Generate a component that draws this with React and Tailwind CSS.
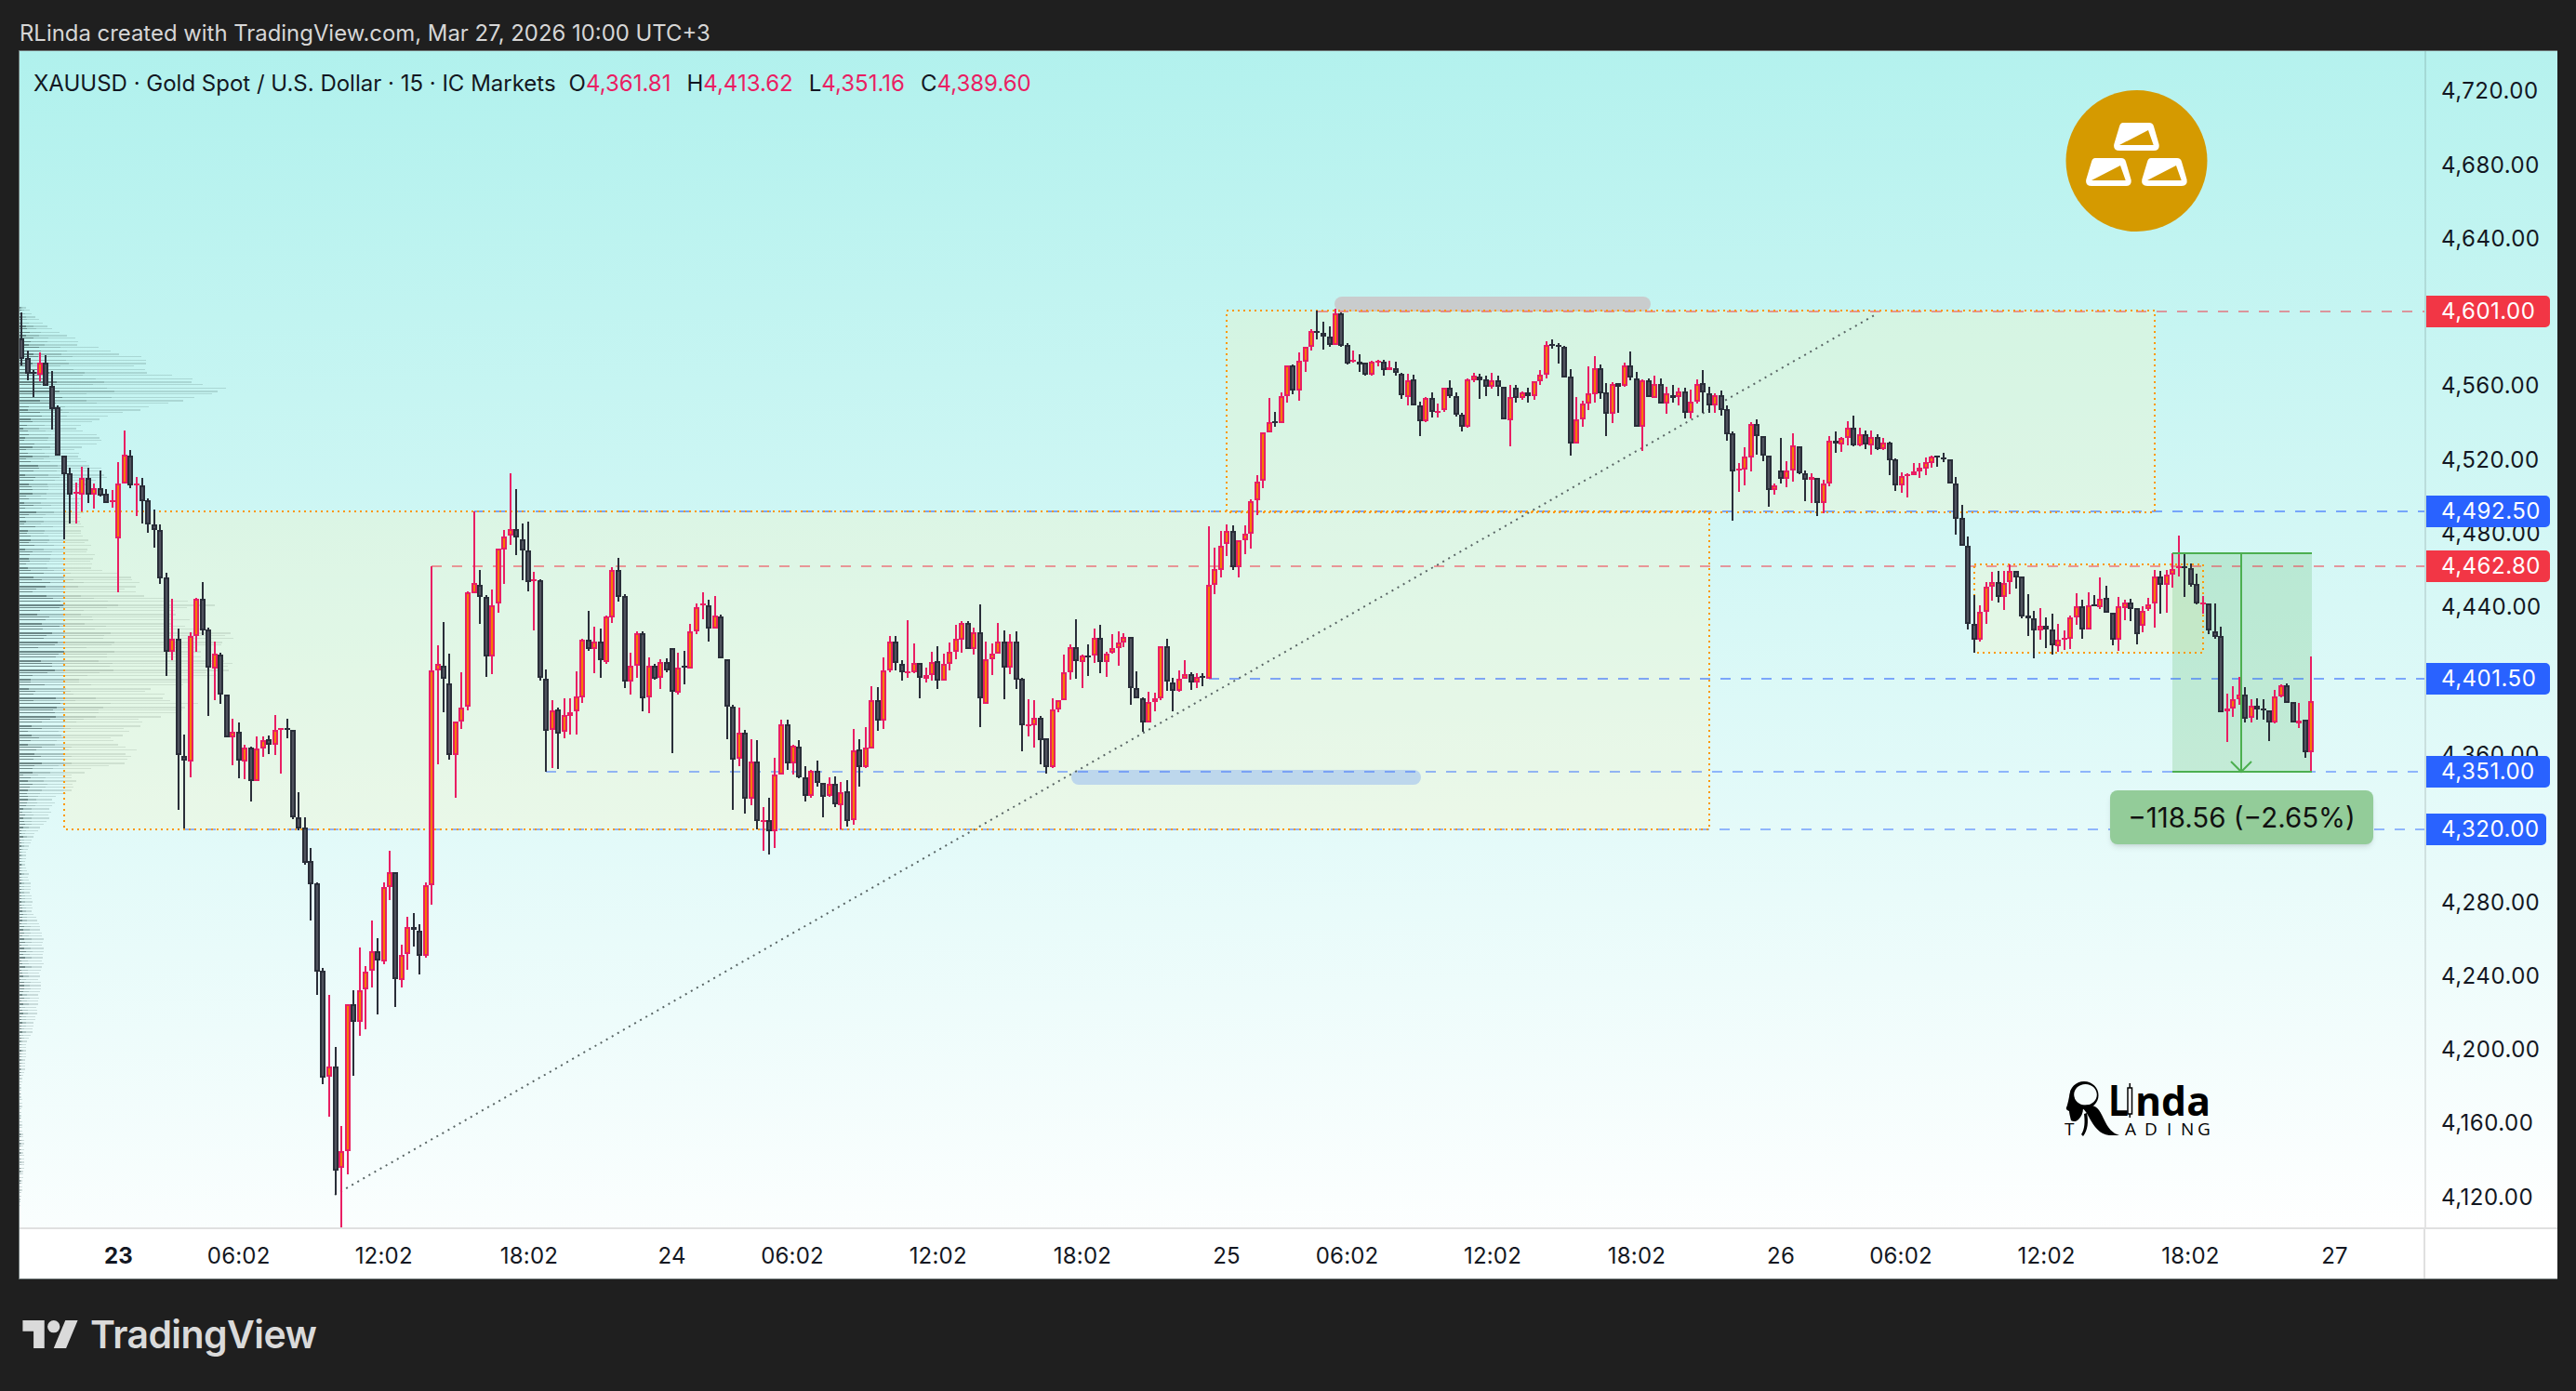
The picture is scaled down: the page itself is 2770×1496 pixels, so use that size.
import React from "react";

const seg = (ox, sx, oy, sy, rows) =>
  rows.map(([zx, up, bt, bb, wt, wb]) => ({
    x: Math.round(ox + zx / sx),
    up,
    bt: oy + bt / sy,
    bb: oy + bb / sy,
    wt: oy + wt / sy,
    wb: oy + wb / sy,
  }));

const A = [
[0,0,364,386,336,393],[1,0,385,402,377,409],[2,0,400,401,398,427],[3,1,390,403,379,410],[4,0,390,415,382,415],[5,0,415,440,399,462],[6,0,438,490,436,490],[7,0,490,510,490,580],[8,0,509,532,503,563],[9,1,529,531,519,563],[10,1,514,532,502,550],[11,0,514,532,503,541],[12,1,525,532,520,547],[13,0,525,533,506,534],[14,0,531,541,526,541],[15,1,538,540,527,546],[16,1,520,579,497,637],[17,1,489,520,463,520],[18,0,490,522,484,525],[19,1,520,522,513,555],[20,0,522,539,514,563],[21,0,538,564,536,573],[22,0,564,570,548,589],[23,0,570,622,564,628],[24,0,621,701,616,727],[25,1,687,701,644,710],[26,0,687,812,676,871],[27,0,813,818,790,891],[28,1,684,819,680,836],[29,1,644,684,643,701],[30,0,644,678,626,683],[31,0,677,718,675,770],[32,1,703,719,690,753],[33,0,704,747,702,757],[34,0,747,793,747,793],[35,1,787,793,773,823],[36,0,787,818,777,837],[37,1,804,819,801,838],[38,0,804,840,803,862],[39,1,805,840,792,840],[40,1,796,805,792,814],[41,0,795,801,791,811],[42,1,785,801,769,812],[43,1,783,785,783,832],[44,0,783,785,773,794],[45,0,785,879,785,881],[46,0,879,891,852,893],[47,0,890,928,879,930],[48,0,926,951,912,990],[49,0,950,1045,949,1070],[50,0,1044,1159,1041,1166],
];

const B = [
[121,1,1268,1290,1118,1375],[136,0,1268,1488,1226,1538],[150,1,1446,1482,1393,1607],[165,1,1136,1445,1136,1495],[179,0,1136,1173,1107,1288],[194,1,1107,1173,1018,1204],[208,1,1069,1107,1056,1190],[223,1,1026,1067,960,1102],[237,0,1026,1046,998,1158],[252,1,890,1046,880,1053],[266,1,858,890,813,917],[280,0,858,1084,858,1143],[295,1,1032,1085,1011,1101],[309,1,975,1032,953,1064],[324,0,975,981,945,1015],[338,0,981,1034,968,1074],[353,1,885,1034,880,1038],[367,1,434,886,214,927],[382,1,420,434,380,630],[396,0,424,452,331,521],[411,0,460,611,398,622],[425,1,541,612,541,702],[440,1,511,541,437,557],[454,1,269,511,267,518],[470,1,248,269,98,269],[484,0,252,278,221,335],[499,0,279,404,275,448],[512,1,295,403,262,441],[528,1,177,292,177,312],[542,1,150,178,138,251],[557,1,136,150,18,169],[571,0,136,154,51,190],[587,0,156,179,124,243],[600,0,181,248,120,267],[614,1,241,245,225,349],[629,0,244,450,242,456],[643,0,450,560,432,647],[658,1,518,560,496,639],[672,0,515,565,512,641],[687,1,528,564,491,575],[702,1,521,528,491,568],[716,1,489,521,435,569],[731,1,368,489,366,501],[745,0,368,388,307,392],[760,1,372,388,341,439],[775,0,373,413,344,447],[789,1,320,416,317,418],[803,1,221,320,216,333],[817,0,221,277,196,288],[833,0,277,458,273,470],[846,1,424,458,396,484],[862,1,354,423,351,449],[876,0,354,492,350,519],[891,1,424,491,406,523],[904,0,424,451,419,453],[918,1,415,449,409,472],[933,0,415,432,408,437],[947,0,387,479,387,608],[962,1,427,480,396,484],[976,0,424,427,392,463],[991,1,350,428,335,430],[1006,1,299,350,292,356],[1021,1,293,295,269,325],[1035,0,295,344,284,372],[1050,1,317,344,276,344],[1064,0,319,407,315,407],[1079,0,409,509,409,578],[1093,0,509,620,506,728],[1108,1,565,620,511,634],[1122,0,565,705,558,734],[1137,1,626,705,579,718],[1151,0,626,752,580,769],[1166,1,748,752,722,815],[1180,0,748,771,702,822],[1195,1,652,771,617,807],[1210,1,546,652,538,652],[1225,0,546,629,537,642],[1238,1,592,629,590,652],[1252,0,593,658,580,660],[1267,0,658,697,635,710],[1282,1,645,697,643,702],[1296,0,645,670,623,678],[1310,0,670,700,670,743],[1325,1,672,698,659,700],[1339,0,672,716,657,721],[1354,1,689,716,668,768],[1368,0,687,750,664,762],[1384,1,601,748,557,758],[1398,0,599,636,578,678],[1413,1,595,636,553,639],[1427,1,495,597,467,597],[1442,0,495,538,468,561],[1456,1,433,538,406,556],[1471,1,373,433,360,437],[1485,0,373,419,360,433],[1500,0,420,437,412,456],[1514,1,435,438,327,449],[1529,1,418,437,376,439],[1543,0,418,449,417,492],[1558,1,442,449,428,460],
];

const C = [
[4,1,695,737,663,755],[18,0,694,757,645,782],[33,1,703,757,669,757],[47,1,664,703,633,722],[62,1,622,664,576,686],[76,1,571,625,565,668],[91,0,571,655,565,655],[105,1,601,655,585,671],[121,0,601,815,510,906],[134,1,688,832,630,832],[150,1,670,689,636,738],[163,1,631,670,570,670],[179,0,631,716,594,816],[192,1,631,716,606,735],[208,0,631,754,597,782],[221,0,751,902,747,983],[237,1,898,902,816,936],[251,1,877,902,819,972],[266,0,877,950,870,1026],[280,0,943,1037,943,1056],[295,1,850,1037,813,1037],[309,1,820,850,820,860],[322,1,730,820,672,820],[338,1,649,730,640,755],[351,0,649,695,558,750],[367,1,676,697,672,780],[381,0,674,677,639,741],[396,1,619,677,588,698],[409,0,619,698,576,732],[425,1,670,698,663,744],[438,1,652,668,606,668],[454,1,634,652,598,708],[467,1,616,634,604,650],[484,0,616,781,616,834],[497,0,781,814,726,814],[513,0,814,892,811,923],[526,1,826,892,792,892],[542,1,814,826,795,855],[555,1,646,814,646,820],[571,0,646,761,621,789],[585,0,761,787,747,855],[600,1,751,791,723,791],[613,1,736,751,690,751],[629,0,736,763,729,786],[643,1,745,763,733,780],[656,0,742,745,732,774],[672,1,448,751,258,751],[685,1,397,448,327,476],[701,1,320,397,273,422],[714,1,274,315,252,354],[730,0,274,391,255,398],[743,1,304,391,304,425],[759,1,283,304,255,348],[773,1,178,283,171,330],[788,1,115,176,93,221],
];

const D = [
[114,1,466,622,466,645],[127,1,433,465,355,467],[139,0,429,433,400,447],[152,1,349,437,337,437],[165,1,250,350,250,369],[177,0,250,332,246,341],[190,1,235,330,208,363],[203,1,190,238,190,270],[216,1,139,190,133,201],[228,0,137,143,72,165],[241,0,143,155,108,198],[254,0,155,182,123,188],[267,1,80,182,67,182],[278,0,80,186,78,189],[292,0,184,243,178,246],[304,1,232,236,202,241],[317,0,236,245,213,270],[329,0,241,279,240,282],[343,1,238,279,235,282],[356,1,234,238,231,252],[368,0,238,265,232,282],[380,1,256,266,235,266],[394,0,259,275,238,282],[406,0,275,345,272,357],[419,1,298,353,277,380],[432,0,295,380,280,380],[445,0,379,431,367,477],[457,1,355,431,350,431],[470,0,355,401,336,417],[482,1,395,401,373,417],[495,1,322,395,320,397],[508,0,322,350,297,353],[521,0,349,410,335,414],[533,0,409,449,403,462],[545,1,295,449,291,449],[558,1,282,296,274,305],[570,0,286,299,275,357],[584,0,295,318,283,350],[596,1,298,318,273,325],[609,0,298,320,282,348],[621,0,319,425,319,425],[635,1,350,425,312,510],[647,0,322,356,312,369],[660,1,337,356,333,359],[672,0,337,350,322,369],[686,1,301,350,301,360],[698,1,280,302,265,312],[711,1,184,281,172,291],[723,0,181,184,166,195],[737,0,184,188,178,243],[749,0,188,286,186,286],[762,0,286,502,262,542],[774,1,424,502,351,502],[787,1,373,425,364,447],[800,1,340,373,252,392],[813,1,258,342,220,369],[825,0,258,338,246,357],[837,0,337,407,307,477],[851,1,310,407,303,435],[862,0,307,320,307,403],[876,1,250,317,240,317],[888,0,250,290,205,299],[902,0,290,446,270,446],[913,1,298,448,295,525],[927,0,298,353,292,353],[939,1,309,353,282,353],[952,0,310,372,292,373],[964,1,340,372,317,405],[978,0,344,353,312,369],[990,1,334,353,322,378],[1004,0,334,402,322,420],[1015,1,367,402,327,420],[1029,1,310,367,295,372],[1041,0,307,338,265,402],[1054,0,340,380,317,402],[1066,1,346,380,338,402],[1080,0,345,392,330,410],[1092,0,391,473,378,492],
];

const E = [
[142,0,138,260,133,420],[156,1,253,257,235,327],[170,1,214,257,183,306],[186,1,108,215,103,263],[199,0,108,148,94,208],[214,0,148,212,146,228],[228,0,211,322,211,375],[243,1,307,323,300,335],[257,0,259,287,153,300],[272,1,259,287,228,312],[286,1,178,260,138,293],[302,0,181,268,179,268],[316,0,268,290,258,357],[331,1,280,290,267,363],[345,0,283,365,283,407],[360,1,301,365,288,396],[374,1,163,302,148,311],[389,0,163,173,133,201],[403,1,153,173,150,198],[418,1,121,155,99,177],[432,0,121,179,82,181],[447,1,142,179,120,181],[461,0,142,176,129,189],[475,1,151,177,130,209],[490,0,151,189,141,191],[504,1,169,191,153,193],[519,0,168,224,166,273],[533,0,223,308,220,324],[548,1,277,308,265,332],[562,1,270,274,267,345],[578,1,262,275,235,275],[591,1,250,263,235,282],[606,1,232,254,217,275],[620,1,213,233,210,248],[635,0,211,214,211,246],[649,0,217,220,201,231],[665,0,223,301,223,301],[679,0,301,416,280,465],[694,0,412,502,370,502],[708,0,502,754,472,773],[723,0,754,806,660,846],[737,1,715,806,693,810],[752,1,634,715,619,755],[766,1,618,633,585,678],[781,0,619,668,582,683],[795,1,622,668,582,708],[808,1,583,620,562,657],[824,0,583,604,583,639],[838,0,601,730,601,735],[853,0,727,737,657,792],[867,0,736,776,711,863],[882,1,760,776,702,803],[896,0,760,772,732,830],[911,0,772,824,720,851],[925,1,805,826,753,842],[940,1,799,802,775,839],[954,1,733,803,727,836],[970,1,697,733,654,755],[984,0,697,772,675,800],[999,1,694,772,651,772],[1012,0,690,694,660,694],[1027,1,673,701,603,704],[1041,0,670,718,630,718],[1057,0,718,805,718,824],[1071,1,697,805,667,840],[1086,1,683,700,675,742],[1100,0,683,704,672,743],[1115,0,703,788,703,819],[1129,1,712,761,697,780],[1143,1,691,707,669,712],[1158,1,601,688,579,765],[1171,0,601,628,582,720],[1187,1,595,628,578,717],[1200,1,575,593,526,636],[1216,1,568,574,468,600],[1230,0,568,574,528,665],[1245,0,573,628,558,632],[1259,0,625,688,590,688],[1275,1,684,688,663,720],[1288,0,688,776,688,786],[1303,0,776,795,687,800],
];

const F = [
[674,0,493,738,463,738],[690,1,726,736,679,836],[704,1,695,725,655,755],[720,1,680,694,625,716],[735,0,680,757,658,773],[751,1,717,757,697,772],[765,0,717,730,693,762],[781,0,727,730,697,762],[796,0,732,770,732,830],[810,1,686,770,666,775],[826,1,650,686,647,688],[840,0,650,706,645,706],[856,0,706,772,706,772],[870,1,765,775,707,788],[886,0,763,868,763,887],[901,1,703,868,558,930],
];

const candles = [
  ...seg(23.4, 1 / 6.48, 0, 1, A),
  ...seg(300, 2.24, 500, 1.96, B),
  ...seg(1000, 2.24, 480, 3, C),
  ...seg(1300, 1.96, 310, 3, D),
  ...seg(1800, 2.24, 420, 3, E),
  ...seg(2100, 2.34, 520, 3, F),
];

const env = [[330,8],[340,18],[350,32],[360,55],[370,70],[380,116],[387,150],[394,134],[400,146],[404,178],[407,206],[410,211],[414,219],[417,242],[421,250],[424,229],[427,201],[430,176],[434,164],[440,141],[444,121],[447,97],[451,82],[454,78],[461,60],[464,77],[470,94],[474,100],[481,63],[494,76],[501,88],[511,101],[520,80],[530,60],[540,75],[560,72],[580,78],[600,86],[610,88],[614,101],[620,133],[632,127],[640,140],[650,215],[660,180],[670,188],[680,232],[685,251],[690,225],[700,205],[711,241],[714,252],[720,226],[731,201],[741,154],[748,165],[757,196],[761,200],[770,155],[780,132],[787,120],[791,111],[800,109],[807,131],[811,130],[814,122],[821,112],[827,79],[831,66],[840,63],[854,53],[857,39],[870,37],[880,34],[885,28],[890,23],[900,15],[910,10],[920,7],[930,6],[940,10],[950,12],[960,13],[970,15],[980,14],[990,22],[1000,25],[1010,27],[1020,26],[1030,28],[1040,25],[1050,22],[1060,25],[1070,22],[1080,22],[1090,19],[1100,16],[1110,15],[1120,8],[1140,7],[1155,5],[1160,3],[1170,2],[1190,3],[1200,2],[1225,5],[1260,5],[1275,3],[1285,2],[1296,1]];

const envAt = (y) => {
  for (let i = 1; i < env.length; i++) {
    if (y <= env[i][0]) {
      const [a, b] = [env[i - 1], env[i]];
      return a[1] + ((b[1] - a[1]) * (y - a[0])) / (b[0] - a[0]);
    }
  }
  return 0;
};
const rnd = (i) => {
  const s = Math.sin(i * 12.9898) * 43758.5453;
  return s - Math.floor(s);
};
const profile = [];
for (let i = 0, y = 330; y < 1296; i++, y += 3.33) {
  const w = envAt(y) * (0.86 + 0.14 * rnd(i));
  profile.push({ y: Math.round(y), w, h: i % 3 === 0 ? 2 : 1, a: 0.06 + 0.2 * rnd(i + 500) });
}

const prices = ["4,720.00","4,680.00","4,640.00","4,600.00","4,560.00","4,520.00","4,480.00","4,440.00","4,400.00","4,360.00","4,320.00","4,280.00","4,240.00","4,200.00","4,160.00","4,120.00"];
const hiddenTicks = ["4,600.00", "4,400.00", "4,320.00"];
const tags = [
  { t: "4,601.00", y: 335, c: "bg-[#f23645]", w: "w-[133px]" },
  { t: "4,492.50", y: 550, c: "bg-[#2962ff]", w: "w-[133px]" },
  { t: "4,462.80", y: 609, c: "bg-[#f23645]", w: "w-[133px]" },
  { t: "4,401.50", y: 730, c: "bg-[#2962ff]", w: "w-[133px]" },
  { t: "4,351.00", y: 830, c: "bg-[#2962ff]", w: "w-[133px]" },
  { t: "4,320.00", y: 892, c: "bg-[#2962ff]", w: "w-[129px]" },
];
const times = [["23",127.5,1],["06:02",256.7],["12:02",412.7],["18:02",569],["24",722.5],["06:02",852],["12:02",1008.7],["18:02",1164],["25",1319],["06:02",1448.6],["12:02",1605],["18:02",1760],["26",1915],["06:02",2044],["12:02",2200.6],["18:02",2355.5],["27",2510.5]];

const levels = [
  { y: 335, x: 1417, c: "#f23645", o: 0.5 },
  { y: 550, x: 510, c: "#2962ff", o: 0.55 },
  { y: 609, x: 464, c: "#f23645", o: 0.5 },
  { y: 730, x: 1300, c: "#2962ff", o: 0.55 },
  { y: 830, x: 587, c: "#2962ff", o: 0.45 },
  { y: 892, x: 199, c: "#2962ff", o: 0.45 },
];
const zones = [
  [69, 550, 1838, 892],
  [1319, 334, 2317, 551],
  [2123, 607, 2369, 702],
];
const font = { fontFamily: "Inter, sans-serif" };

const Bar = ({ x, y }) => (
  <g transform={`translate(${x} ${y})`}>
    <path d="M10 0H38Q42 0 43 4L48.5 23Q49.8 30 43 30H6Q-1 30 .3 23L6 4Q7 0 10 0Z" fill="#fff" />
    <path d="M6 24L37 8L42.7 24Z" fill="#d59a00" />
  </g>
);

const Chart = () => (
  <svg viewBox="21 55 2586 1265" className="block w-[2586px] h-[1265px]">
    <g shapeRendering="crispEdges">
      {profile.map((r, i) => (
        <g key={i}>
          <rect x="21" y={r.y} width={r.w} height={r.h} fill="#3f5f5f" fillOpacity="0.2" />
          <rect x="21" y={r.y} width={r.w * (0.28 + r.a)} height={r.h} fill="#3f5f5f" fillOpacity="0.2" />
          <rect x="21" y={r.y} width={r.w * r.a} height={r.h} fill="#2f4545" fillOpacity="0.45" />
        </g>
      ))}
    </g>
    {zones.map(([a, b, c, d], i) => (
      <rect key={i} x={a} y={b} width={c - a} height={d - b} fill="#fff4be" fillOpacity="0.28" />
    ))}
    <rect x="1435" y="319" width="340" height="16" rx="8" fill="#c9cccd" />
    <rect x="1152" y="828" width="376" height="16" rx="8" fill="#bdd7ec" />
    <rect x="2336" y="595" width="150" height="235" fill="#4caf50" fillOpacity="0.2" />
    {levels.map((l, i) => (
      <line key={i} x1={l.x} y1={l.y} x2="2607" y2={l.y} stroke={l.c} strokeOpacity={l.o} strokeWidth="2" strokeDasharray="11 11" shapeRendering="crispEdges" />
    ))}
    {zones.map(([a, b, c, d], i) => (
      <rect key={i} x={a} y={b} width={c - a} height={d - b} fill="none" stroke="#ff9800" strokeWidth="2" strokeDasharray="2 4" shapeRendering="crispEdges" />
    ))}
    <line x1="360" y1="1285" x2="2019" y2="337" stroke="#5a6666" strokeWidth="2" strokeDasharray="2 5" />
    <g shapeRendering="crispEdges">
      {candles.map((k, i) => {
        const h = Math.max(Math.round(k.bb - k.bt), 2);
        const top = Math.round(k.bt);
        return (
          <g key={i}>
            <rect x={k.x - 1} y={Math.round(k.wt)} width="2" height={Math.round(k.wb - k.wt)} fill={k.up ? "#e91e63" : "#2a2e39"} />
            <rect x={k.x - 3} y={top} width="6" height={h} fill={k.up ? "#e91e63" : "#2a2e39"} />
            {h > 4 && <rect x={k.x - 1} y={top + 2} width="2" height={h - 4} fill={k.up ? "#f57c00" : "#50535e"} />}
          </g>
        );
      })}
    </g>
    <path d="M2336 595H2486M2336 830H2486M2410 595V830M2399 819L2410 830L2421 819" fill="none" stroke="#4caf50" strokeWidth="2" />
    <circle cx="2297.5" cy="173" r="76" fill="#d59a00" />
    <Bar x={2273} y={132} />
    <Bar x={2243} y={170} />
    <Bar x={2303} y={170} />
    <g fill="#000">
      <path fillRule="evenodd" d="M2241 1163C2250 1163 2256.500 1170 2256.500 1178C2256.500 1186 2250 1192 2241 1193C2232 1193 2225.500 1186 2225.500 1178C2225.500 1170 2232 1163 2241 1163ZM2242.500 1166C2235.500 1166 2230.200 1171 2230.200 1177.300C2230.200 1183.500 2235.500 1188.600 2242.500 1188.600C2249.500 1188.600 2254.800 1183.500 2254.800 1177.300C2254.800 1171 2249.500 1166 2242.500 1166Z" />
      <path d="M2227 1172L2230 1179C2231 1186 2235 1190 2240 1192C2240 1197 2238 1201 2235 1204C2233 1206 2230 1207 2227 1205C2226 1201 2225 1197 2225 1195C2222 1194 2221 1192 2222.500 1190C2224 1186 2225 1178 2227 1172Z" />
      <path d="M2237 1190C2252 1186 2256 1190 2262 1203C2267 1214 2272 1219 2279 1221L2268 1221C2258 1220 2252 1212 2246 1201C2243 1195 2240 1192 2237 1190Z" />
      <path d="M2240 1222C2245 1216 2246 1206 2244 1197L2241 1198C2242 1206 2242 1214 2238 1220Z" />
      <text x="2267" y="1200" fontFamily="Open Sans, sans-serif" fontWeight="700" fontSize="47" textLength="22" lengthAdjust="spacingAndGlyphs">L</text>
      <text x="2296" y="1200" fontFamily="Open Sans, sans-serif" fontWeight="700" fontSize="43" textLength="81" lengthAdjust="spacingAndGlyphs">nda</text>
      <rect x="2289.500" y="1165" width="1.500" height="37" />
      <rect x="2288" y="1170" width="4.500" height="28" fill="#fff" stroke="#000" strokeWidth="1.500" />
      <text x="2220" y="1221" fontFamily="Open Sans, sans-serif" fontSize="19">T</text>
      <text x="2285 2306 2330 2345 2363" y="1221" fontFamily="Open Sans, sans-serif" fontSize="19">ADING</text>
    </g>
  </svg>
);

export default function App() {
  return (
    <div className="w-[2770px] h-[1496px] bg-[#1f1f1f] flex flex-col overflow-hidden" style={font}>
      <div className="h-[54px] flex items-center pl-[21px] pt-[18px] text-[23.9px] text-[#d6d6d6] whitespace-nowrap">
        RLinda created with TradingView.com, Mar 27, 2026 10:00 UTC+3
      </div>
      <div className="ml-[20px] w-[2730px] h-[1322px] flex flex-col border-l border-t border-b border-[#6d7676] bg-white">
        <div className="h-[1265px] flex bg-[linear-gradient(178deg,#b0f1ed_0%,#ffffff_100%)]">
          <div className="relative w-[2586px] h-full">
            <Chart />
            <div className="absolute left-[15px] top-[23px] flex text-[24px] leading-[24px] text-[#131722] whitespace-nowrap">
              <span className="mr-[14px]">XAUUSD · Gold Spot / U.S. Dollar · 15 · IC Markets</span>
              {[["O", "4,361.81"], ["H", "4,413.62"], ["L", "4,351.16"], ["C", "4,389.60"]].map(([l, v]) => (
                <span key={l} className="mr-[17px]">
                  {l}<span className="text-[#e91e63]">{v}</span>
                </span>
              ))}
            </div>
            <div className="absolute left-[2248px] top-[795px] w-[283px] h-[58px] flex items-center justify-center rounded-[8px] bg-[#93cc99] text-[29.5px] text-[#111] shadow-md whitespace-nowrap">
              −118.56 (−2.65%)
            </div>
          </div>
          <div className="relative flex-1 border-l-2 border-black/10 text-[24px] tracking-[0.5px] text-[#131722]">
            {prices.map((p, i) =>
              hiddenTicks.includes(p) ? null : (
                <span key={p} className="absolute left-[16px] -translate-y-1/2 leading-none" style={{ top: 97.7 + i * 79.3 - 54.5 }}>
                  {p}
                </span>
              )
            )}
            {tags.map((t) => (
              <span key={t.t} className={`absolute left-0 h-[34px] pl-[16px] flex items-center -translate-y-1/2 rounded-r-[5px] text-white ${t.c} ${t.w}`} style={{ top: t.y - 55 }}>
                {t.t}
              </span>
            ))}
          </div>
        </div>
        <div className="relative flex-1 border-t-2 border-[#e0e0e0] text-[24px] tracking-[0.2px] text-[#131722]">
          <div className="absolute left-[2585px] top-0 h-full w-[2px] bg-[#e0e0e0]" />
          {times.map(([t, x, b], i) => (
            <span key={i} className={`absolute top-[calc(50%+2px)] -translate-x-1/2 -translate-y-1/2 leading-none ${b ? "font-bold" : ""}`} style={{ left: x - 21 }}>
              {t}
            </span>
          ))}
        </div>
      </div>
      <div className="flex-1 flex items-start pl-[24px] pt-[44px] text-[#dadada]">
        <svg viewBox="0 4 35.5 18" className="w-[60px] h-[30px] fill-[#dadada]">
          <path d="M14 22H7V11H0V4h14v18zM28 22h-8l7.5-18h8L28 22z" />
          <circle cx="20" cy="8" r="4" />
        </svg>
        <span className="ml-[13px] text-[41px] leading-[30px] font-semibold tracking-[-0.6px]">TradingView</span>
      </div>
    </div>
  );
}
